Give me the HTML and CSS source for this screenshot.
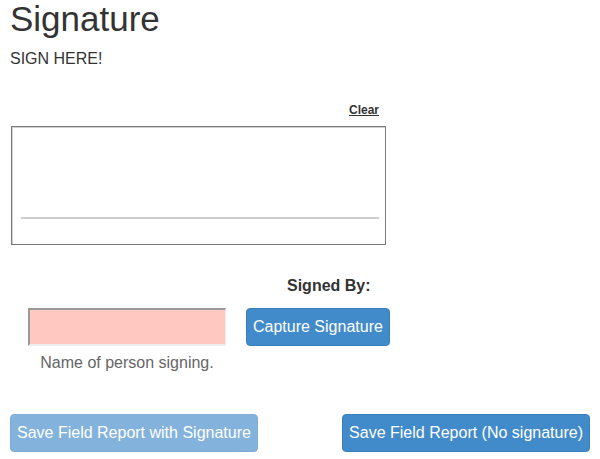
FILE: index.html
```html
<!DOCTYPE html>
<html lang="en">
<head>
    <meta charset="UTF-8">
    <title>Signature</title>
    <link rel="stylesheet" href="styles.css">
</head>
<body>
    <div class="container">
        <h1>Signature</h1>
        <p class="intro">SIGN HERE!</p>

        <!-- 署名エリア -->
        <div class="pad-wrap">
            <div class="pad-tools">
                <a href="#" class="clear-link">Clear</a>
            </div>
            <div class="pad">
                <div class="pad-line"></div>
            </div>
        </div>

        <div class="signed-label">Signed By:</div>

        <div class="signer-row">
            <div class="signer-field">
                <input type="text" class="signer-input">
                <div class="help-text">Name of person signing.</div>
            </div>
            <button type="button" class="btn">Capture Signature</button>
        </div>

        <div class="actions">
            <button type="button" class="btn" disabled>Save Field Report with Signature</button>
            <button type="button" class="btn">Save Field Report (No signature)</button>
        </div>
    </div>
</body>
</html>
```

FILE: styles.css
```css
/* 全体 */
body {
    font-family: "Liberation Sans", Arial, sans-serif;
    font-size: 16px;
    color: #333;
    background-color: white;
    margin: 0;
}

.container {
    padding: 0 10px;
}

h1 {
    font-size: 35px;
    font-weight: normal;
    line-height: 1.1;
    margin: 0 0 10px;
}

.intro {
    font-size: 16px;
    line-height: 20px;
    margin: 0;
}

/* 署名エリア */
.pad-wrap {
    width: 375px;
    margin: 31px 0 0 1px;
}

.pad-tools {
    text-align: right;
    padding-right: 7px;
    line-height: 17px;
    margin-bottom: 7px;
}

.clear-link {
    font-size: 12px;
    font-weight: bold;
    color: #333;
    text-decoration: underline;
}

.pad {
    box-sizing: border-box;
    height: 119px;
    border: 1px solid #7a7a7a;
    box-shadow: inset 1px 1px 0 #d0d0d0;
    display: flex;
    flex-direction: column;
    justify-content: flex-end;
    padding: 0 6px 25px 9px;
}

.pad-line {
    height: 2px;
    background-color: #ccc;
}

.signed-label {
    font-weight: bold;
    line-height: 20px;
    margin: 31px 0 0 277px;
}

.signer-row {
    display: flex;
    align-items: flex-start;
    gap: 20px;
    margin: 12px 0 0 18px;
}

.signer-field {
    width: 198px;
}

.signer-input {
    display: block;
    box-sizing: border-box;
    width: 198px;
    height: 38px;
    margin: 0;
    background-color: #ffc9c2;
    border-style: solid;
    border-width: 2px 1px 2px 2px;
    border-color: #999 #eee #eee #999;
}

.help-text {
    text-align: center;
    color: #666;
    line-height: 22px;
    margin-top: 6px;
}

/* ボタン */
.btn {
    font-family: "Liberation Sans", Arial, sans-serif;
    font-size: 16px;
    line-height: 22px;
    color: white;
    background-color: #428bca;
    border: 1px solid #3a80bf;
    border-radius: 4px;
    padding: 7px 6px;
    cursor: pointer;
}

.btn:disabled {
    opacity: 0.65;
    cursor: not-allowed;
}

.actions {
    display: flex;
    justify-content: space-between;
    margin-top: 40px;
}
```
